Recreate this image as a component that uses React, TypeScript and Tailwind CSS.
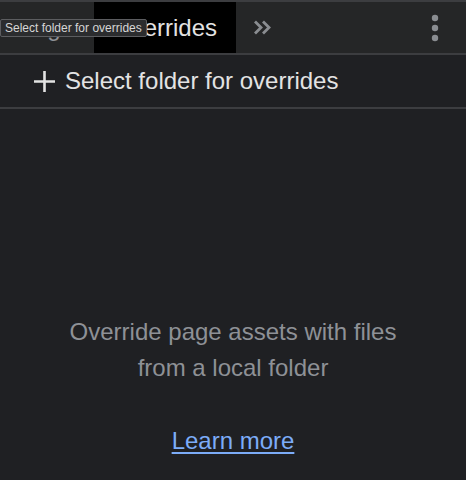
const font = { fontFamily: '"Liberation Sans", Arial, sans-serif' };

function ChevronsRight() {
  return (
    <svg width="19" height="15" viewBox="0 0 19 15" fill="none" stroke="#8a8d91" strokeWidth="2.8">
      <path d="M2 1.5 L8 7.5 L2 13.5" />
      <path d="M10 1.5 L16 7.5 L10 13.5" />
    </svg>
  );
}

function MoreVertical() {
  return (
    <svg width="8" height="28" viewBox="0 0 8 28" fill="#8a8d91">
      <circle cx="4" cy="4" r="3.2" />
      <circle cx="4" cy="14" r="3.2" />
      <circle cx="4" cy="24" r="3.2" />
    </svg>
  );
}

function PlusIcon() {
  return (
    <svg width="21" height="21" viewBox="0 0 21 21" stroke="#e3e3e3" strokeWidth="2.6">
      <path d="M10.5 0 V21 M0 10.5 H21" />
    </svg>
  );
}

export default function App() {
  return (
    <div className="relative flex h-[480px] w-[466px] flex-col overflow-hidden bg-[#1f2023]" style={font}>
      <div className="flex h-[55px] items-stretch border-t-2 border-b-2 border-[#3c3d40] bg-[#252627]">
        <div className="flex w-[94px] items-center pl-[18px] text-[24px] text-[#8e9196]">Page</div>
        <div className="flex w-[142px] items-center bg-black pl-[19px] text-[24px] text-[#e3e3e3]">Overrides</div>
        <div className="flex items-center pl-[17px]">
          <ChevronsRight />
        </div>
        <div className="ml-auto flex items-center pr-[27px]">
          <MoreVertical />
        </div>
      </div>
      <div className="flex h-[54px] items-center gap-[10px] border-b-2 border-[#3c3d40] pl-[34px] text-[24px] text-[#e3e3e3]">
        <PlusIcon />
        <span>Select folder for overrides</span>
      </div>
      <div className="flex flex-1 flex-col items-center pt-[205px] text-center">
        <p className="text-[24px] leading-[36px] text-[#8e9196]">
          Override page assets with files
          <br />
          from a local folder
        </p>
        <a href="#" className="mt-[37px] text-[24px] leading-[36px] text-[#7cacf8] underline underline-offset-[3px]">
          Learn more
        </a>
      </div>
      <div className="absolute left-0 top-[19px] rounded-[2px] border border-[#5c5d60] bg-[#2b2c2e] px-[4px] py-[1px] text-[12px] leading-[14px] text-[#d6d6d6]">
        Select folder for overrides
      </div>
    </div>
  );
}
